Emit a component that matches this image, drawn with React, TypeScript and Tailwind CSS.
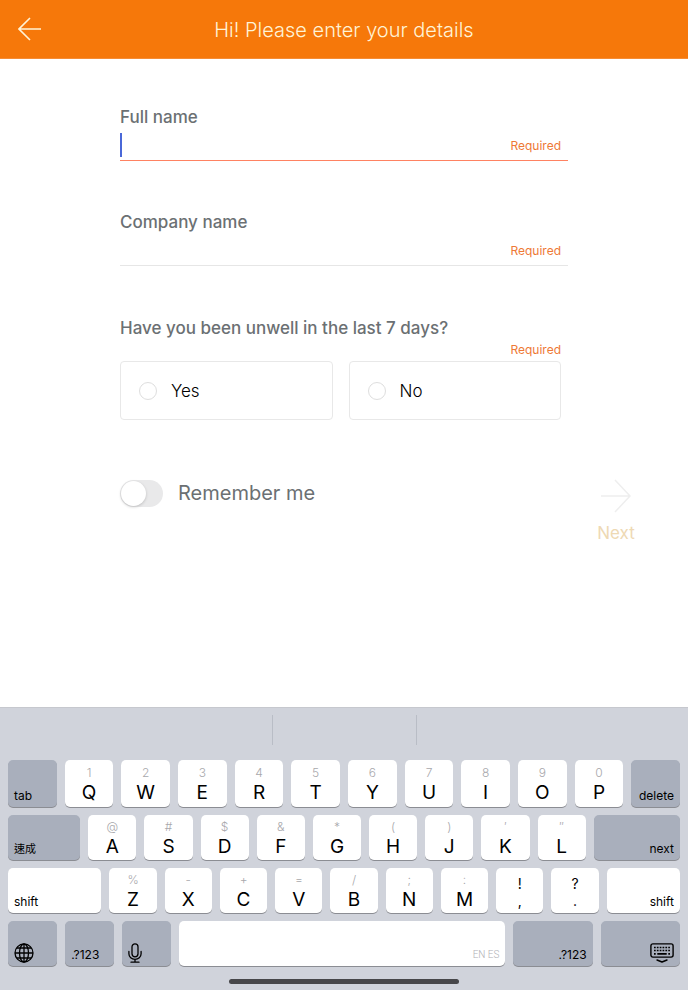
import { useState } from "react";

type KeyProps = {
  main: string;
  alt: string;
};

const topRow: KeyProps[] = [
  { alt: "1", main: "Q" },
  { alt: "2", main: "W" },
  { alt: "3", main: "E" },
  { alt: "4", main: "R" },
  { alt: "5", main: "T" },
  { alt: "6", main: "Y" },
  { alt: "7", main: "U" },
  { alt: "8", main: "I" },
  { alt: "9", main: "O" },
  { alt: "0", main: "P" },
];

const homeRow: KeyProps[] = [
  { alt: "@", main: "A" },
  { alt: "#", main: "S" },
  { alt: "$", main: "D" },
  { alt: "&", main: "F" },
  { alt: "*", main: "G" },
  { alt: "(", main: "H" },
  { alt: ")", main: "J" },
  { alt: "′", main: "K" },
  { alt: "″", main: "L" },
];

const bottomRow: KeyProps[] = [
  { alt: "%", main: "Z" },
  { alt: "-", main: "X" },
  { alt: "+", main: "C" },
  { alt: "=", main: "V" },
  { alt: "/", main: "B" },
  { alt: ";", main: "N" },
  { alt: ":", main: "M" },
];

const keyBase = "min-w-0 rounded-[5px] shadow-[0_1px_0_#8b8d93]";
const letterKey = `${keyBase} flex flex-col items-center justify-center bg-white pt-0.5`;
const darkKey = `${keyBase} flex items-end bg-[#a9afbc] px-1.5 pb-[3px] leading-4`;
const lightKey = `${keyBase} flex items-end bg-white px-1.5 pb-[3px] leading-4`;

const LetterKey = ({ main, alt }: KeyProps) => (
  <button type="button" className={letterKey}>
    <span className="text-xs leading-4 font-light text-[#a8a8ac]">{alt}</span>
    <span className="text-[19px] leading-6">{main}</span>
  </button>
);

const PunctuationKey = ({ main, alt }: KeyProps) => (
  <button type="button" className={`${letterKey} text-sm leading-[17px]`}>
    <span>{alt}</span>
    <span>{main}</span>
  </button>
);

const GlobeIcon = () => (
  <svg viewBox="0 0 20 20" className="size-5" fill="none" stroke="currentColor" strokeWidth="1.3">
    <circle cx="10" cy="10" r="9" />
    <ellipse cx="10" cy="10" rx="4.5" ry="9" />
    <path d="M10 1v18M1 10h18M2.8 5h14.4M2.8 15h14.4" />
  </svg>
);

const MicIcon = () => (
  <svg viewBox="0 0 14 20" className="h-5 w-3.5" fill="none" stroke="currentColor" strokeWidth="1.3" strokeLinecap="round">
    <rect x="4" y="0.8" width="6" height="13" rx="3" />
    <path d="M0.9 8.5v2.2a6.1 5.6 0 0 0 12.2 0V8.5M7 16.3v2.9M3 19.2h8" />
  </svg>
);

const HideKeyboardIcon = () => (
  <svg viewBox="0 0 24 20" className="h-5 w-6" fill="none" stroke="currentColor" strokeWidth="1.4" strokeLinecap="round" strokeLinejoin="round">
    <rect x="0.9" y="0.9" width="22.2" height="13.2" rx="2" />
    <path d="M4 4.5h16M4 7.5h16" strokeWidth="1.7" strokeLinecap="butt" strokeDasharray="1.7 1.15" />
    <path d="M4 10.8h1.7M18.3 10.8H20M7.3 10.8h9.4" strokeWidth="1.7" strokeLinecap="butt" />
    <path d="M7 17l5 2 5-2" />
  </svg>
);

const Keyboard = () => (
  <section aria-label="Keyboard" className="border-t border-[#c6c8ce] bg-[#d0d3db] text-black">
    <div className="flex h-[52px] justify-center pt-[7px]">
      <div className="h-[30px] w-[145px] border-x border-[#b9bdc6]" />
    </div>

    <div className="flex flex-col gap-2 px-2 text-xs">
      <div className="grid h-[47px] grid-cols-12 gap-2">
        <button type="button" className={darkKey}>tab</button>
        {topRow.map((k) => (
          <LetterKey key={k.main} {...k} />
        ))}
        <button type="button" className={`${darkKey} justify-end`}>delete</button>
      </div>

      <div className="grid h-[45px] grid-cols-[72fr_repeat(9,48fr)_86fr] gap-2">
        <button type="button" className={`${darkKey} text-[11px]`}>速成</button>
        {homeRow.map((k) => (
          <LetterKey key={k.main} {...k} />
        ))}
        <button type="button" className={`${darkKey} justify-end`}>next</button>
      </div>

      <div className="grid h-[45px] grid-cols-[93fr_repeat(9,47fr)_73fr] gap-2">
        <button type="button" className={lightKey}>shift</button>
        {bottomRow.map((k) => (
          <LetterKey key={k.main} {...k} />
        ))}
        <PunctuationKey alt="!" main="," />
        <PunctuationKey alt="?" main="." />
        <button type="button" className={`${lightKey} justify-end`}>shift</button>
      </div>

      <div className="grid h-[45px] grid-cols-[49fr_49fr_49fr_325fr_79fr_79fr] gap-2">
        <button type="button" aria-label="Change language" className={darkKey}>
          <GlobeIcon />
        </button>
        <button type="button" className={darkKey}>.?123</button>
        <button type="button" aria-label="Dictate" className={darkKey}>
          <MicIcon />
        </button>
        <button
          type="button"
          className={`${lightKey} justify-end font-['Roboto',sans-serif] text-[10px] font-light text-[#b0b0b5]`}
        >
          EN ES
        </button>
        <button type="button" className={`${darkKey} justify-end`}>.?123</button>
        <button type="button" aria-label="Hide keyboard" className={`${darkKey} justify-end`}>
          <HideKeyboardIcon />
        </button>
      </div>
    </div>

    <div className="flex h-6 items-end justify-center pb-1.5">
      <div className="h-[5px] w-[230px] rounded-full bg-[#47474a]" />
    </div>
  </section>
);

const App = () => {
  const [fullName, setFullName] = useState("");
  const [company, setCompany] = useState("");
  const [unwell, setUnwell] = useState("");
  const [remember, setRemember] = useState(false);

  return (
    <div className="flex min-h-screen flex-col bg-white font-['Inter','Noto_Sans_CJK_TC',sans-serif]">
      <header className="grid h-[59px] grid-cols-[1fr_auto_1fr] items-center border-b border-[#f58c35] bg-[#f6780a] px-[18px] text-[#fff3d6]">
        <button type="button" aria-label="Back" className="w-6">
          <svg viewBox="0 0 24 24" className="size-6" fill="none" stroke="currentColor" strokeWidth="1.6">
            <path d="M23 12H1M12 1L1 12l11 11" />
          </svg>
        </button>
        <h1 className="pt-0.5 text-xl leading-6 font-light">Hi! Please enter your details</h1>
      </header>

      <main className="grid flex-1 grid-cols-[1fr_minmax(0,448px)_1fr] content-start pt-[46px]">
        <form className="col-start-2 flex flex-col text-[#6b7073]">
          <label htmlFor="fullName" className="text-[17px] leading-6 font-medium">Full name</label>
          <div className="flex h-8 items-center border-b border-[#ff8262] pr-[7px]">
            <span className="h-6 w-0.5 bg-[#4a68d8]" />
            <input
              id="fullName"
              type="text"
              className="min-w-0 flex-1 caret-transparent outline-none"
              value={fullName}
              onChange={(e) => setFullName(e.target.value)}
              required
            />
            <span className="pt-0.5 text-xs leading-4 text-[#ee7936]">Required</span>
          </div>

          <label htmlFor="company" className="mt-[49px] text-[17px] leading-6 font-medium">Company name</label>
          <div className="flex h-8 items-center border-b border-[#e6e6e6] pr-[7px]">
            <input
              id="company"
              type="text"
              className="min-w-0 flex-1 outline-none"
              value={company}
              onChange={(e) => setCompany(e.target.value)}
              required
            />
            <span className="pt-0.5 text-xs leading-4 text-[#ee7936]">Required</span>
          </div>

          <fieldset className="mt-[50px] pr-[7px]">
            <legend className="text-[17px] leading-6 font-medium">Have you been unwell in the last 7 days?</legend>
            <p className="mt-0.5 text-right text-xs leading-4 text-[#ee7936]">Required</p>
            <div className="mt-[3px] grid grid-cols-2 gap-4">
              {["Yes", "No"].map((option) => (
                <label
                  key={option}
                  className="flex h-[59px] items-center gap-3.5 rounded border border-[#e8e8e8] pl-[18px] text-[17px] leading-6 font-light text-black"
                >
                  <input
                    type="radio"
                    name="unwell"
                    value={option}
                    checked={unwell === option}
                    onChange={() => setUnwell(option)}
                    className="size-[18px] appearance-none rounded-full border border-[#dedede] checked:border-[#f6780a] checked:bg-[#f6780a]"
                  />
                  {option}
                </label>
              ))}
            </div>
          </fieldset>

          <label htmlFor="remember" className="mt-[60px] flex items-center gap-[15px] text-xl leading-[27px]">
            <input
              id="remember"
              type="checkbox"
              role="switch"
              checked={remember}
              onChange={(e) => setRemember(e.target.checked)}
              className="h-[27px] w-[43px] appearance-none rounded-full bg-[#e9e9ea] p-px before:block before:size-[25px] before:rounded-full before:bg-white before:shadow-[0_1px_3px_#00000030] checked:bg-[#f6780a] checked:before:ml-4"
            />
            Remember me
          </label>
        </form>

        <button
          type="button"
          className="col-start-3 mr-6 -mb-[38px] flex flex-col items-center gap-2 self-end text-[17px] leading-6 text-[#eed9b4]"
        >
          <svg viewBox="0 0 30 34" className="h-[34px] w-[30px]" fill="none" stroke="#eeeeee" strokeWidth="1.5">
            <path d="M0 17h29M14 1l15 16-15 16" />
          </svg>
          Next
        </button>
      </main>

      <Keyboard />
    </div>
  );
};

export default App;
